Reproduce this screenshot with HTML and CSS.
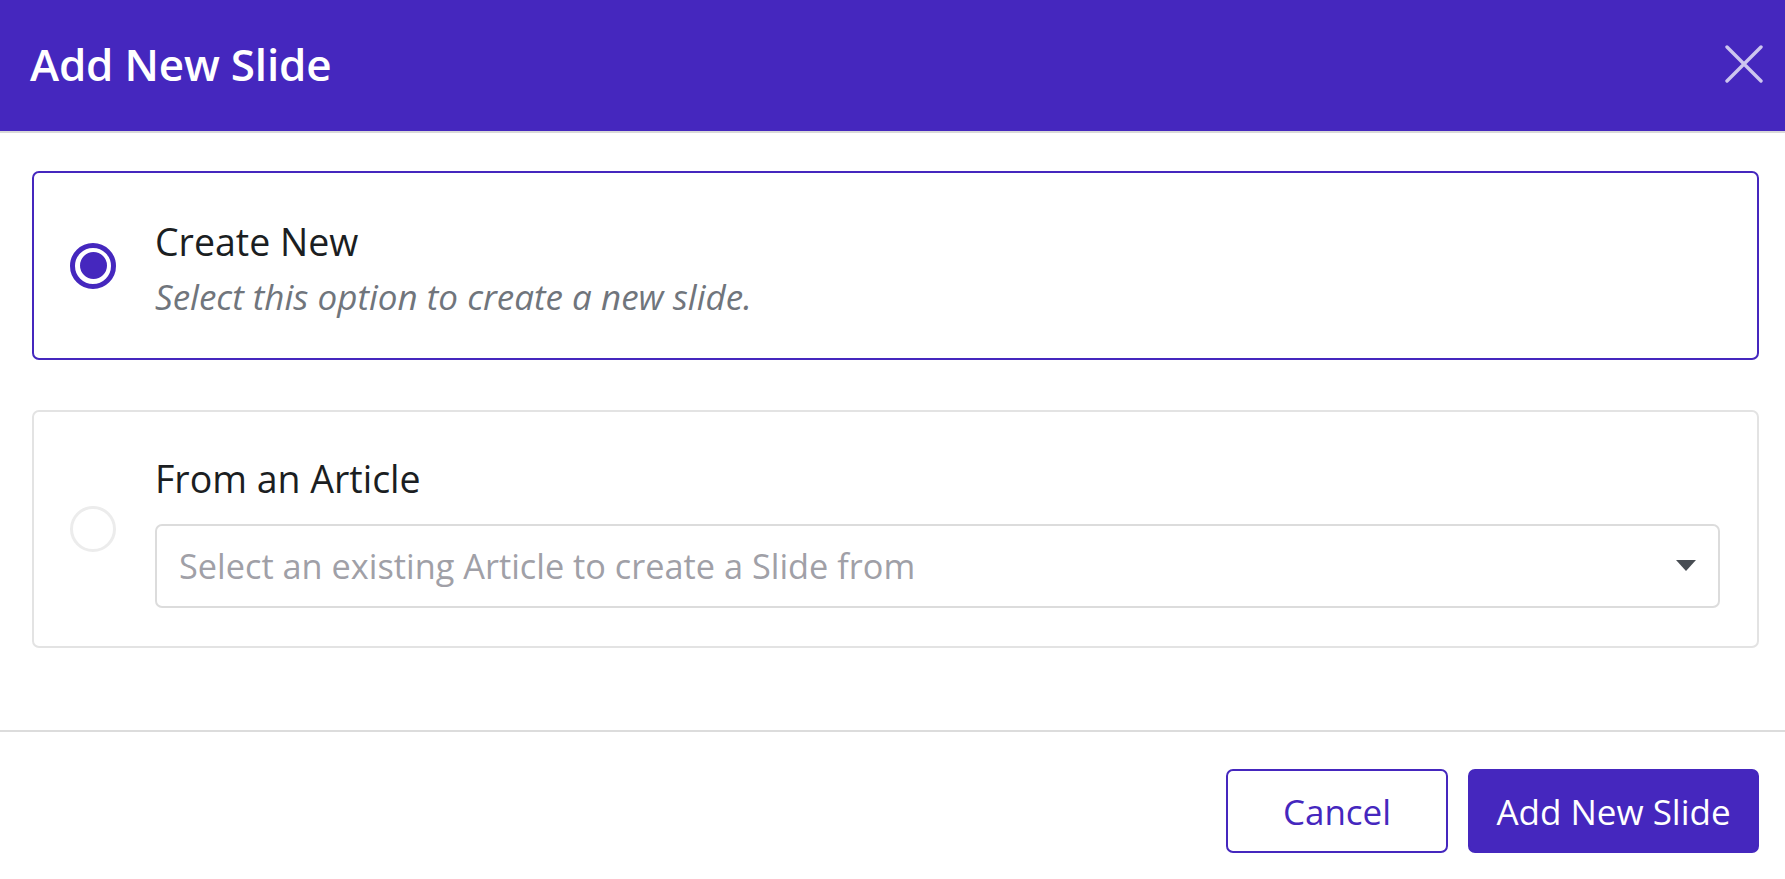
FILE: index.html
```html
<!DOCTYPE html>
<html lang="en">
<head>
<meta charset="utf-8">
<title>Add New Slide</title>
<link rel="stylesheet" href="styles.css">
</head>
<body>
<div class="modal">
  <header class="modal-header">
    <h1 class="modal-title">Add New Slide</h1>
    <button class="close-btn" aria-label="Close">
      <svg width="38" height="38" viewBox="0 0 38 38"><path d="M2 2 L36 36 M36 2 L2 36" stroke="#cdc6ef" stroke-width="3.4" stroke-linecap="round" fill="none"/></svg>
    </button>
  </header>
  <main class="modal-body">
    <label class="option option-selected">
      <span class="radio radio-on"><span class="radio-dot"></span></span>
      <span class="option-text">
        <span class="option-title">Create New</span>
        <span class="option-desc">Select this option to create a new slide.</span>
      </span>
    </label>
    <label class="option option-article">
      <span class="radio radio-off"></span>
      <span class="option-text option-text-wide">
        <span class="option-title">From an Article</span>
        <span class="select">
          <span class="select-placeholder">Select an existing Article to create a Slide from</span>
          <span class="select-arrow"></span>
        </span>
      </span>
    </label>
  </main>
  <footer class="modal-footer">
    <button class="btn btn-outline">Cancel</button>
    <button class="btn btn-primary">Add New Slide</button>
  </footer>
</div>
</body>
</html>
```

FILE: styles.css
```css
* { box-sizing: border-box; }
html, body { margin: 0; padding: 0; background: #ffffff; }
body { font-family: "Open Sans", "Noto Sans", sans-serif; color: #1b1e22; }

.modal { display: flex; flex-direction: column; height: 100vh; }

.modal-header {
  height: 133px;
  background: #4527be;
  border-bottom: 2px solid #d9d9d9;
  display: flex;
  align-items: center;
  justify-content: space-between;
  padding: 0 22px 0 30px;
}
.modal-title {
  margin: 0;
  color: #ffffff;
  font-size: 44px;
  font-weight: 600;
  letter-spacing: -0.2px;
  padding-bottom: 4px;
}
.close-btn {
  background: none;
  border: 0;
  padding: 0;
  width: 38px;
  height: 38px;
  display: flex;
  margin-bottom: 4px;
}

.modal-body {
  flex: 1;
  padding: 38px 26px 0 32px;
  display: flex;
  flex-direction: column;
  gap: 50px;
}

.option {
  display: flex;
  align-items: center;
  border-radius: 7px;
  padding: 0 37px 0 36px;
  gap: 39px;
}
.option-selected { height: 189px; border: 2px solid #4527be; }
.option-article { height: 238px; border: 2px solid #e3e3e3; }

.radio {
  width: 46px;
  height: 46px;
  border-radius: 50%;
  flex: none;
  display: flex;
  align-items: center;
  justify-content: center;
}
.radio-on { border: 5px solid #4527be; }
.radio-dot { width: 27px; height: 27px; border-radius: 50%; background: #4527be; }
.radio-off { border: 3px solid #ececec; }

.option-text { display: flex; flex-direction: column; padding-top: 6px; }
.option-text-wide { flex: 1; padding-top: 0; }
.option-title { font-size: 37.5px; line-height: 55px; color: #1b1e22; }
.option-desc { font-size: 35px; line-height: 55px; font-style: italic; color: #70757c; }

.select {
  margin-top: 18px;
  height: 84px;
  border: 2px solid #dcdcdc;
  border-radius: 7px;
  display: flex;
  align-items: center;
  justify-content: space-between;
  padding: 0 22px 0 22px;
}
.select-placeholder { font-size: 34.3px; color: #a0a0a7; }
.select-arrow {
  width: 0;
  height: 0;
  border-left: 10px solid transparent;
  border-right: 10px solid transparent;
  border-top: 11px solid #484d53;
}

.modal-footer {
  border-top: 2px solid #dcdcdc;
  padding: 37px 26px 26px 32px;
  display: flex;
  justify-content: flex-end;
  gap: 20px;
}
.btn {
  height: 84px;
  border-radius: 7px;
  font-family: "Open Sans", "Noto Sans", sans-serif;
  font-size: 35px;
  cursor: pointer;
}
.btn-outline {
  width: 222px;
  background: #ffffff;
  border: 2px solid #4527be;
  color: #4527be;
}
.btn-primary {
  width: 291px;
  background: #4527be;
  border: 2px solid #4527be;
  color: #ffffff;
}
```
